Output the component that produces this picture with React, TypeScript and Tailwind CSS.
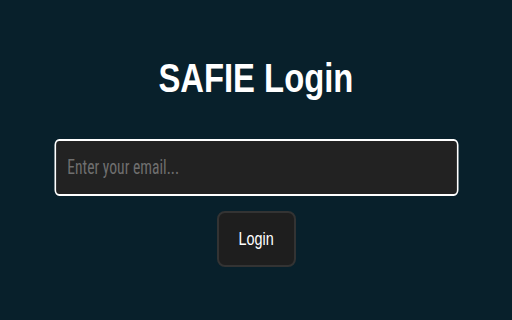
import React from "react";

// the reference is squeezed sideways, so text gets a horizontal scale
const LoginCard = () => {
  return (
    <div className="flex flex-col items-center pt-[55px]">
      <h1 className={`font-["Liberation_Sans",Arial,sans-serif] text-[40px] leading-[46px] font-bold text-white`}>
        <span className="inline-block scale-x-[0.82]">SAFIE Login</span>
      </h1>

      <input
        type="email"
        placeholder="Enter your email..."
        className={`font-["Roboto_Condensed","Liberation_Sans",sans-serif] mt-[38px] w-[505px] h-[57px] shrink-0 scale-x-[0.8] rounded-md border-y-2 border-x-[2.5px] border-white bg-[#222222] px-[14px] text-[19.5px] text-white placeholder:text-[#6f6f6f] outline-none`}
      />

      <button
        className={`font-["Liberation_Sans",Arial,sans-serif] mt-[15px] w-[79px] h-[56px] rounded-lg border-2 border-[#333333] bg-[#1e1e1e] text-[18px] text-white`}
      >
        <span className="inline-block scale-x-[0.8]">Login</span>
      </button>
    </div>
  );
};

export default function App() {
  return (
    <div className="w-[512px] h-[320px] bg-[#08202b] overflow-hidden">
      <LoginCard />
    </div>
  );
}
